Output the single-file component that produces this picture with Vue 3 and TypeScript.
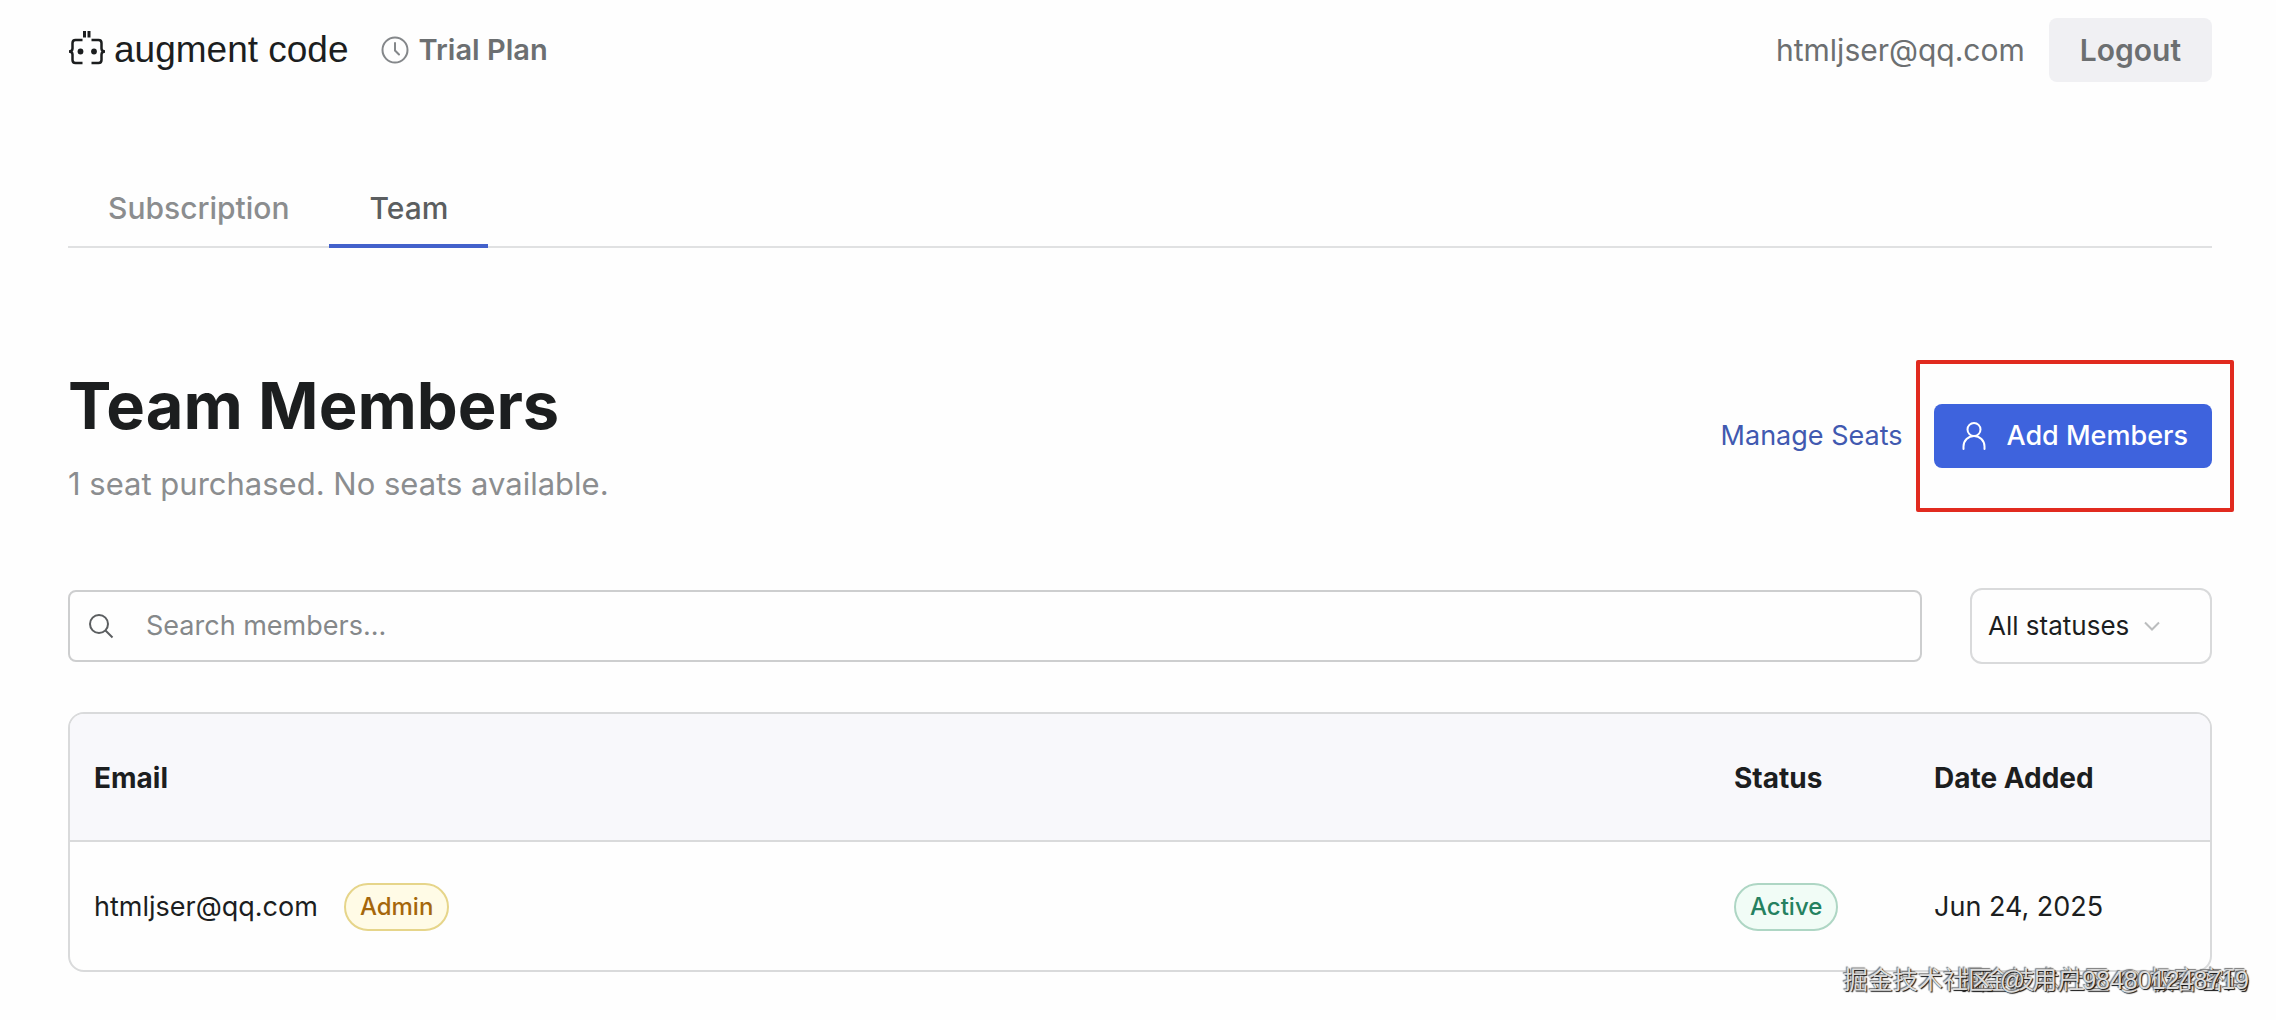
<script setup lang="ts">
import { computed, ref } from 'vue'

interface Member {
  email: string
  role: string
  status: string
  added: string
}

const members: Member[] = [
  { email: 'htmljser@qq.com', role: 'Admin', status: 'Active', added: 'Jun 24, 2025' },
]

const query = ref('')
const status = ref('All statuses')
const statuses = ['All statuses', 'Active']

const visible = computed(() =>
  members.filter(
    (m) =>
      m.email.includes(query.value) &&
      (status.value === 'All statuses' || m.status === status.value),
  ),
)
</script>

<template>
  <div class="page">
    <header class="topbar">
      <a class="brand" href="#">
        <svg class="brand-mark" viewBox="0 0 38 36" width="38" height="36" fill="none" stroke="#1c1e1f" stroke-width="2.500">
          <path d="M16.500 1v6.500M21 1v6.500" stroke-width="3" />
          <path d="M14.500 10H7.500q-3 0-3 3v5.500q0 3-3.500 3q3.500 0 3.500 3V30q0 3 3 3h7" />
          <path d="M23.500 10H30.500q3 0 3 3v5.500q0 3 3.500 3q-3.500 0-3.500 3V30q0 3-3 3h-7" />
          <circle cx="12.500" cy="21.500" r="2.900" fill="#1c1e1f" stroke="none" />
          <circle cx="26" cy="21.500" r="2.900" fill="#1c1e1f" stroke="none" />
        </svg>
        <span class="brand-name">augment code</span>
      </a>
      <div class="plan">
        <svg viewBox="0 0 28 28" width="28" height="28" fill="none" stroke="#84878a" stroke-width="2" stroke-linecap="round">
          <circle cx="14" cy="14" r="12.500" />
          <path d="M14 7v7.500l4 4" />
        </svg>
        <span>Trial Plan</span>
      </div>
      <span class="account">htmljser@qq.com</span>
      <button class="logout" type="button">Logout</button>
    </header>

    <nav class="tabs">
      <a class="tab" href="#subscription">Subscription</a>
      <a class="tab active" href="#team">Team</a>
    </nav>

    <main>
      <section class="heading">
        <div>
          <h1>Team Members</h1>
          <p>1 seat purchased. No seats available.</p>
        </div>
        <div class="actions">
          <a class="manage" href="#seats">Manage Seats</a>
          <div class="marked">
            <button class="add" type="button">
              <svg viewBox="0 0 24 30" width="24" height="30" fill="none" stroke="#fff" stroke-width="2" stroke-linecap="round">
                <circle cx="12" cy="8.500" r="6.500" />
                <path d="M1.500 28v-2.500a10.500 10.500 0 0 1 21 0V28" />
              </svg>
              <span>Add Members</span>
            </button>
          </div>
        </div>
      </section>

      <section class="filters">
        <label class="search">
          <svg viewBox="0 0 26 26" width="26" height="26" fill="none" stroke="#5b5e60" stroke-width="2">
            <circle cx="11" cy="11" r="9" />
            <path d="M17.500 17.500l7 7" />
          </svg>
          <input v-model="query" type="search" placeholder="Search members..." aria-label="Search members" />
        </label>
        <div class="select">
          <select v-model="status" aria-label="Status">
            <option v-for="s in statuses" :key="s">{{ s }}</option>
          </select>
          <svg viewBox="0 0 16 10" width="16" height="10" fill="none" stroke="#bbbdbe" stroke-width="2">
            <path d="M1 1.500l7 7 7-7" />
          </svg>
        </div>
      </section>

      <table class="members">
        <thead>
          <tr>
            <th scope="col">Email</th>
            <th scope="col" class="col-status">Status</th>
            <th scope="col" class="col-date">Date Added</th>
          </tr>
        </thead>
        <tbody>
          <tr v-for="m in visible" :key="m.email">
            <td>
              <div class="member">
                <span>{{ m.email }}</span>
                <span class="badge admin">{{ m.role }}</span>
              </div>
            </td>
            <td><span class="badge live">{{ m.status }}</span></td>
            <td>{{ m.added }}</td>
          </tr>
        </tbody>
      </table>
    </main>

    <span class="watermark">掘金技术社区 @ 极客密码</span>
    <span class="watermark">掘金技术社区 @ 用户984801248719</span>
  </div>
</template>

<style>
body {
  background: #fefefe;
}
</style>

<style scoped>
.page {
  position: relative;
  box-sizing: border-box;
  padding: 18px 64px 48px 68px;
  color: #1c1e1f;
  font-family: Inter, "Noto Sans CJK SC", sans-serif;
  font-size: 27px;
  line-height: 40px;
}

a {
  color: inherit;
  text-decoration: none;
}

button,
input,
select {
  font: inherit;
  color: inherit;
}

svg {
  display: block;
  flex: none;
}

.topbar {
  display: flex;
  align-items: center;
  height: 64px;
  font-size: 30px;
}

.brand {
  display: flex;
  align-items: center;
  gap: 8px;
}

.brand-mark {
  margin-bottom: 4px;
}

.brand-name {
  font-family: "Liberation Sans", sans-serif;
  font-size: 37px;
}

.plan {
  display: flex;
  align-items: center;
  gap: 10px;
  margin-left: 32px;
  color: #6c6f71;
  font-size: 29px;
  font-weight: 600;
}

.account {
  margin-left: auto;
  color: #6c6f71;
}

.logout {
  height: 64px;
  margin-left: 24px;
  padding: 0 31px;
  border: 0;
  border-radius: 8px;
  background: #f0f0f3;
  color: #6c6f71;
  font-weight: 600;
}

.tabs {
  display: flex;
  margin-top: 86px;
  box-shadow: inset 0 -2px #e0e1e2;
}

.tab {
  padding: 22px 40px 18px;
  border-bottom: 4px solid transparent;
  font-size: 30px;
  line-height: 36px;
  color: #8b8d8f;
  font-weight: 500;
}

.tab.active {
  border-color: #4361cb;
  color: #5b5e60;
}

.heading {
  display: flex;
  align-items: center;
  justify-content: space-between;
  margin-top: 120px;
}

h1 {
  margin: 0;
  font-size: 65px;
  line-height: 76px;
  font-weight: 700;
}

p {
  margin: 20px 0 0;
  color: #8b8d8f;
  font-size: 31px;
}

.actions {
  display: flex;
  align-items: center;
  gap: 14px;
}

.manage {
  color: #4159b0;
}

/* Callout frame that reaches past the content edge */
.marked {
  padding: 40px 18px 40px 14px;
  margin: -8px -22px -8px 0;
  border: 4px solid #e12a1f;
  border-radius: 2px;
}

.add {
  display: flex;
  align-items: center;
  gap: 20px;
  height: 64px;
  padding: 0 24px 0 28px;
  border: 0;
  border-radius: 8px;
  background: #3e63dd;
  color: #fff;
  font-weight: 500;
}

.filters {
  display: flex;
  align-items: center;
  gap: 48px;
  margin-top: 84px;
}

.search {
  display: flex;
  flex: 1;
  align-items: center;
  gap: 32px;
  box-sizing: border-box;
  height: 72px;
  padding: 0 18px;
  border: 2px solid #cdcecf;
  border-radius: 8px;
}

.search input {
  flex: 1;
  padding: 0;
  border: 0;
  outline: 0;
  background: none;
  appearance: none;
}

.search input::placeholder {
  color: #85888a;
  opacity: 1;
}

.select {
  display: grid;
  align-items: center;
  width: 242px;
}

.select > * {
  grid-area: 1 / 1;
}

.select select {
  box-sizing: border-box;
  width: 100%;
  height: 76px;
  padding: 0 16px;
  border: 2px solid #d9dadb;
  border-radius: 12px;
  background: none;
  font-size: 26px;
  appearance: none;
}

.select svg {
  justify-self: end;
  margin-right: 52px;
  pointer-events: none;
}

.members {
  width: 100%;
  margin-top: 48px;
  border: 2px solid #d9dadb;
  border-radius: 16px;
  border-spacing: 0;
  overflow: hidden;
  table-layout: fixed;
}

th,
td {
  box-sizing: border-box;
  height: 128px;
  padding: 2px 24px 0;
  text-align: left;
}

th {
  border-bottom: 2px solid #d9dadb;
  background: #f8f8fb;
  font-size: 28px;
  font-weight: 700;
}

.col-status {
  width: 200px;
}

.col-date {
  width: 300px;
}

.member {
  display: flex;
  align-items: center;
  gap: 26px;
}

.badge {
  display: inline-block;
  padding: 0 14px;
  border: 2px solid;
  border-radius: 24px;
  font-size: 24px;
  line-height: 44px;
  font-weight: 500;
}

.badge.admin {
  border-color: #e6d58a;
  background: #fffbe6;
  color: #a5670b;
}

.badge.live {
  border-color: #aed6c4;
  background: #f1fcf6;
  color: #258160;
}

.watermark {
  position: absolute;
  right: 27px;
  bottom: 20px;
  color: #dcdcdc;
  font-family: "Liberation Sans", "Noto Sans CJK SC", sans-serif;
  font-size: 25px;
  text-shadow: 1px 1px 1px #111, -1px -1px 1px #777;
  white-space: nowrap;
}
</style>
